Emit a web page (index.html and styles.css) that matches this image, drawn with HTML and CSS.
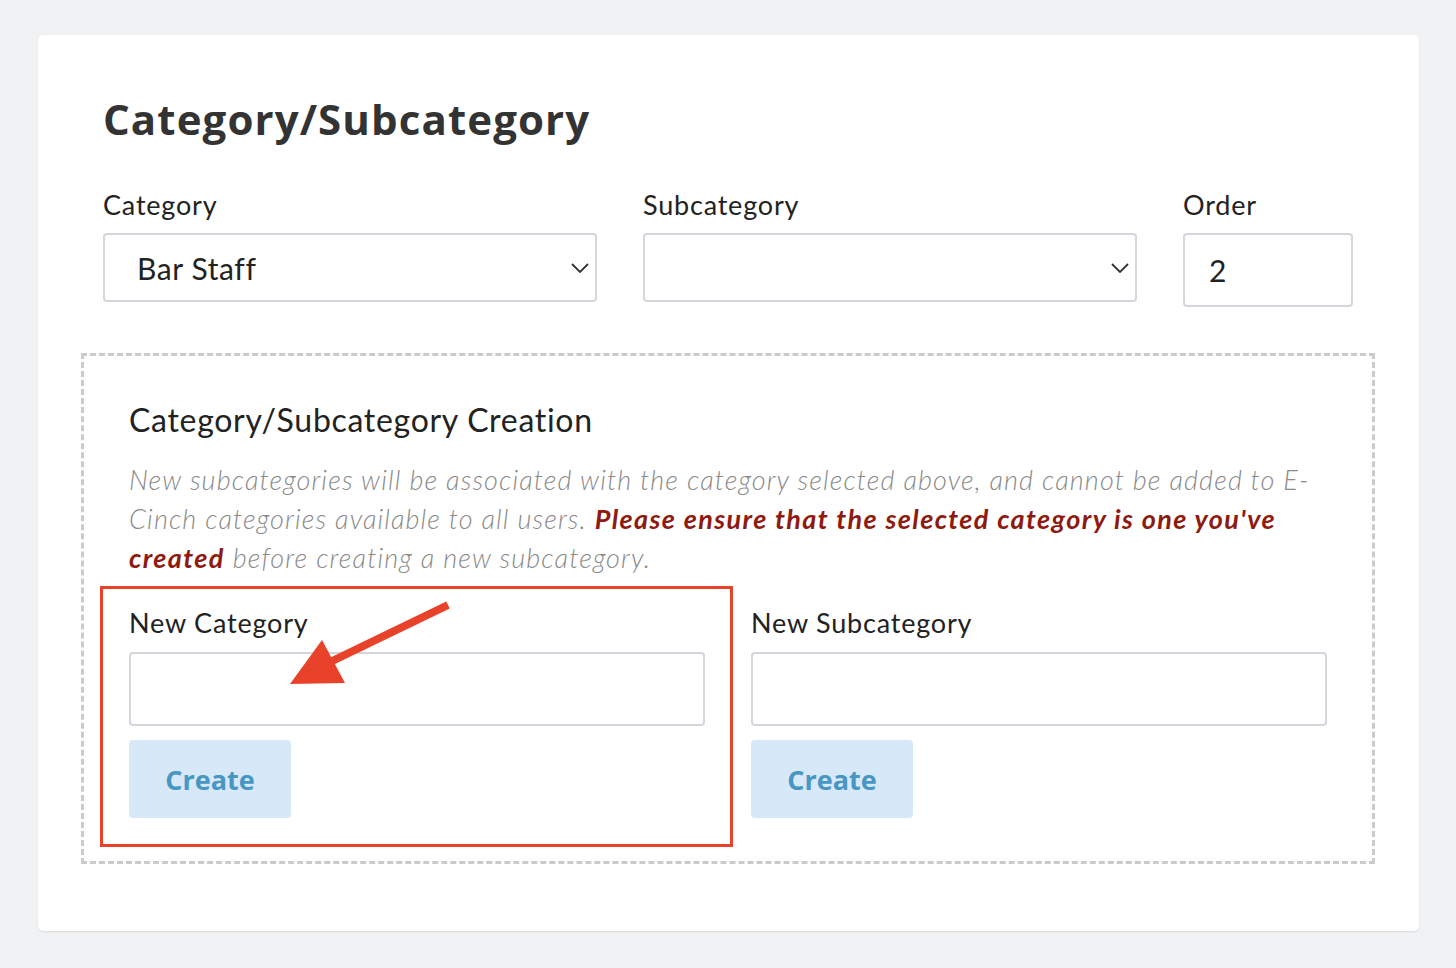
FILE: index.html
```html
<!DOCTYPE html>
<html>
<head>
<meta charset="utf-8">
<link rel="stylesheet" href="styles.css">
</head>
<body>
<div class="card">
  <h1 class="title">Category/Subcategory</h1>
  <div class="top-row">
    <div class="field">
      <label class="label">Category</label>
      <div class="select">
        <span class="select-value">Bar Staff</span>
        <svg class="chevron" width="18" height="10" viewBox="0 0 18 10"><path d="M1 1 L9 9 L17 1" fill="none" stroke="#333" stroke-width="1.8"/></svg>
      </div>
    </div>
    <div class="field">
      <label class="label">Subcategory</label>
      <div class="select">
        <span class="select-value"></span>
        <svg class="chevron" width="18" height="10" viewBox="0 0 18 10"><path d="M1 1 L9 9 L17 1" fill="none" stroke="#333" stroke-width="1.8"/></svg>
      </div>
    </div>
    <div class="field">
      <label class="label">Order</label>
      <div class="order-input">2</div>
    </div>
  </div>
  <div class="creation">
    <h2 class="creation-title">Category/Subcategory Creation</h2>
    <p class="note">New subcategories will be associated with the category selected above, and cannot be added to E-Cinch categories available to all users. <strong class="warn">Please ensure that the selected category is one you've created</strong> before creating a new subcategory.</p>
    <div class="create-row">
      <div class="create-col">
        <label class="label">New Category</label>
        <div class="text-input"></div>
        <button class="btn">Create</button>
      </div>
      <div class="create-col">
        <label class="label">New Subcategory</label>
        <div class="text-input"></div>
        <button class="btn">Create</button>
      </div>
    </div>
  </div>
</div>
<div class="highlight"></div>
<svg class="arrow" width="1456" height="968" viewBox="0 0 1456 968">
  <line x1="448" y1="605" x2="326" y2="664" stroke="#e8432a" stroke-width="8"/>
  <polygon points="290,684 322,640 345,683" fill="#e8432a"/>
</svg>
</body>
</html>
```
FILE: styles.css
```css
html, body {
  margin: 0;
  padding: 0;
}
body {
  position: relative;
  background: #f1f2f4;
  width: 1456px;
  height: 968px;
  overflow: hidden;
  font-family: Lato, "Open Sans", sans-serif;
  color: #222;
}
.card {
  box-sizing: border-box;
  margin: 35px 0 0 38px;
  width: 1381px;
  height: 896px;
  background: #fff;
  border-radius: 5px;
  box-shadow: 0 1px 2px rgba(0,0,0,0.10);
  padding: 60px 66px 0 65px;
}
.title {
  margin: 0;
  font-family: "Open Sans", Lato, sans-serif;
  font-size: 42px;
  line-height: 48px;
  letter-spacing: 1.1px;
  font-weight: 700;
  color: #333;
}
.top-row {
  display: grid;
  grid-template-columns: 494px 494px 170px;
  column-gap: 46px;
  align-items: start;
  margin-top: 46px;
}
.field {
  display: flex;
  flex-direction: column;
}
.label {
  font-size: 27px;
  line-height: 31px;
  letter-spacing: 0.8px;
  color: #222;
  margin-bottom: 13px;
}
.select {
  box-sizing: border-box;
  height: 69px;
  border: 2px solid #d3d6da;
  border-radius: 4px;
  display: flex;
  align-items: center;
  justify-content: space-between;
  padding: 0 6px 0 32px;
}
.select-value {
  font-size: 30px;
  letter-spacing: 0.6px;
  color: #222;
}
.order-input {
  box-sizing: border-box;
  height: 74px;
  border: 2px solid #d3d6da;
  border-radius: 4px;
  display: flex;
  align-items: center;
  padding-left: 24px;
  font-size: 30px;
  color: #222;
}
.creation {
  margin: 46px -22px 0 -22px;
  border: 3px dashed #cbcbcb;
  padding: 45px 45px 43px 45px;
}
.creation-title {
  margin: 0;
  font-size: 32px;
  line-height: 37px;
  letter-spacing: 0.7px;
  font-weight: 400;
  color: #222;
}
.note {
  margin: 22px 0 0 0;
  font-size: 27px;
  line-height: 39px;
  letter-spacing: 1.1px;
  font-style: italic;
  font-weight: 300;
  color: #8a8a8a;
}
.warn {
  color: #8e1a10;
  font-weight: 700;
  letter-spacing: 1.4px;
}
.create-row {
  display: grid;
  grid-template-columns: 576px 576px;
  column-gap: 46px;
  margin-top: 30px;
}
.create-col {
  display: flex;
  flex-direction: column;
  align-items: flex-start;
}
.create-col .label {
  margin-bottom: 14px;
}
.text-input {
  box-sizing: border-box;
  width: 100%;
  height: 74px;
  border: 2px solid #d3d6da;
  border-radius: 4px;
}
.btn {
  margin-top: 14px;
  width: 162px;
  height: 78px;
  border: none;
  border-radius: 4px;
  background: #d7e8f9;
  color: #4796c3;
  font-family: "Open Sans", Lato, sans-serif;
  font-size: 27px;
  font-weight: 700;
  padding: 0;
}
.highlight {
  position: absolute;
  left: 100px;
  top: 586px;
  width: 627px;
  height: 255px;
  border: 3px solid #e8432a;
}
.arrow {
  position: absolute;
  left: 0;
  top: 0;
  pointer-events: none;
}
```
